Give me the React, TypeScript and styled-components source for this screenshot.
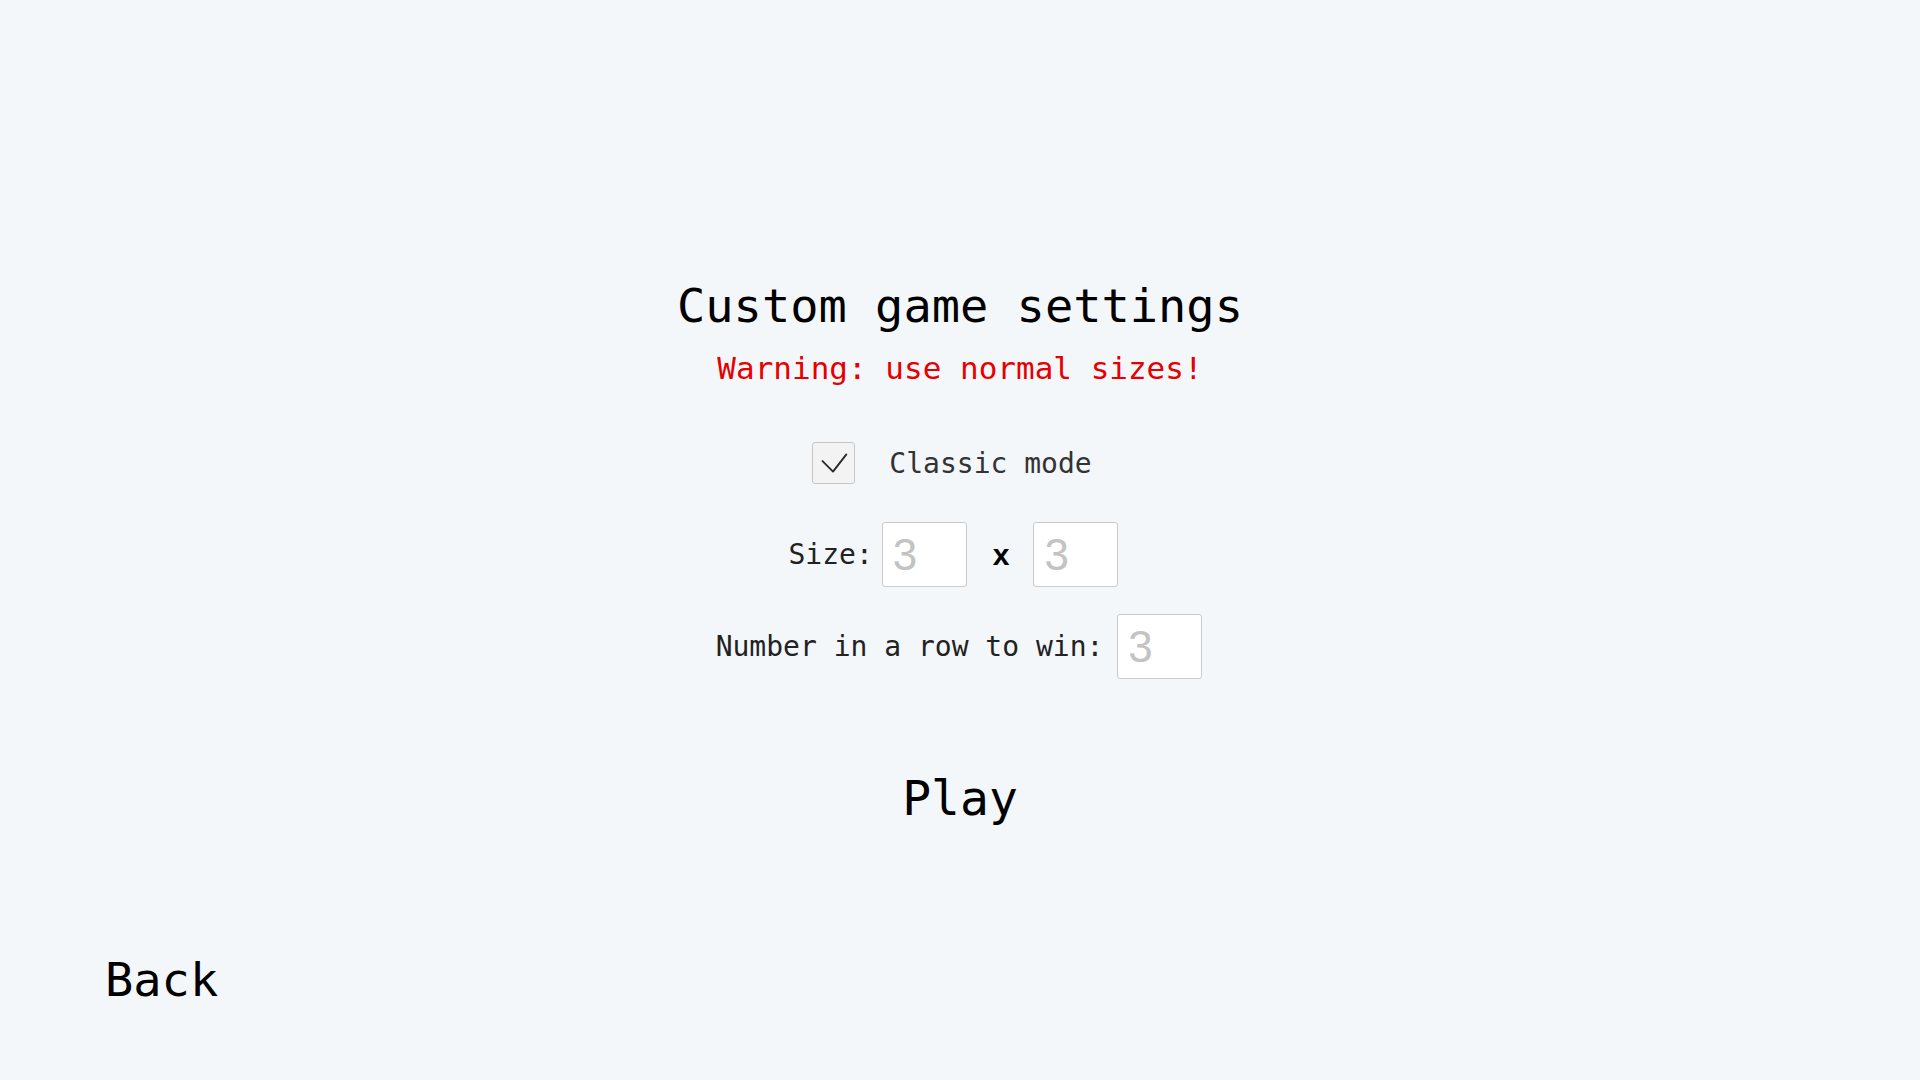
import React from "react";
import styled, { createGlobalStyle } from "styled-components";

const GlobalStyle = createGlobalStyle`
    html, body {
        margin: 0;
        padding: 0;
        background: #f4f7fa;
    }

    body {
        font-family: "DejaVu Sans Mono", "Liberation Mono", monospace;
    }
`;

const App = () => {

    return (
        <Page>
            <GlobalStyle />

            <Settings>
                <Title>Custom game settings</Title>
                <Warning>Warning: use normal sizes!</Warning>

                <CheckRow>
                    <CheckBox type="button" aria-checked="true" role="checkbox">
                        <svg width="43" height="42" viewBox="0 0 43 42">
                            <polyline
                                points="10,19 21,30 35,12"
                                fill="none"
                                stroke="#2b2b2b"
                                strokeWidth="2"
                                strokeLinecap="round"
                                strokeLinejoin="round"
                            />
                        </svg>
                    </CheckBox>
                    <CheckLabel>Classic mode</CheckLabel>
                </CheckRow>

                <FieldRow $shift={13} $gap={9}>
                    <FieldLabel>Size:</FieldLabel>
                    <NumberInput placeholder="3" />
                    <Times>x</Times>
                    <NumberInput placeholder="3" />
                </FieldRow>

                <FieldRow $shift={2} $gap={14} $top={27}>
                    <FieldLabel>Number in a row to win:</FieldLabel>
                    <NumberInput placeholder="3" />
                </FieldRow>

                <PlayButton>Play</PlayButton>
            </Settings>

            <Footer>
                <BackButton>Back</BackButton>
            </Footer>
        </Page>
    )
};

const Page = styled.div`
    min-height: 100vh;
    display: flex;
    flex-direction: column;
    color: #000;
`;

const Settings = styled.main`
    display: flex;
    flex-direction: column;
    align-items: center;
    padding-top: 278px;
`;

const Title = styled.h1`
    margin: 0;
    font-size: 47px;
    font-weight: 400;
    line-height: 56px;
    color: #000;
`;

const Warning = styled.p`
    margin: 16px 0 0;
    font-size: 31px;
    line-height: 36px;
    color: #e60000;
`;

const CheckRow = styled.div`
    display: flex;
    align-items: center;
    gap: 34px;
    margin-top: 56px;
    padding-right: 16px;
`;

const CheckBox = styled.button`
    width: 43px;
    height: 42px;
    padding: 0;
    display: flex;
    align-items: center;
    justify-content: center;
    background: #f3f3f3;
    border: 1px solid #c6c6c6;
    border-radius: 3px;
    box-sizing: border-box;
    cursor: pointer;

    svg {
        display: block;
    }
`;

const CheckLabel = styled.span`
    font-size: 28px;
    color: #333;
`;

const FieldRow = styled.div<{ $shift: number; $gap: number; $top?: number }>`
    display: flex;
    align-items: center;
    gap: ${(p) => p.$gap}px;
    margin-top: ${(p) => p.$top ?? 38}px;
    padding-right: ${(p) => p.$shift}px;
`;

const FieldLabel = styled.label`
    font-size: 28px;
    color: #222;
`;

const Times = styled.span`
    font-family: "Liberation Sans", Arial, sans-serif;
    font-weight: 700;
    font-size: 30px;
    margin: 0 15px 0 17px;
    color: #000;
`;

const NumberInput = styled.input`
    width: 85px;
    height: 65px;
    box-sizing: border-box;
    padding: 0 0 0 10px;
    background: #fff;
    border: 1px solid #cacaca;
    border-radius: 3px;
    font-family: "Liberation Sans", Arial, sans-serif;
    font-size: 44px;
    color: #333;
    outline: none;

    &::placeholder {
        color: #c3c3c3;
    }
`;

const PlayButton = styled.button`
    margin-top: 91px;
    padding: 0;
    background: none;
    border: none;
    font-family: "DejaVu Sans Mono", "Liberation Mono", monospace;
    font-size: 48px;
    line-height: 56px;
    color: #000;
    cursor: pointer;
`;

const Footer = styled.footer`
    display: flex;
    padding: 126px 0 0 105px;
`;

const BackButton = styled.button`
    padding: 0;
    background: none;
    border: none;
    font-family: "DejaVu Sans Mono", "Liberation Mono", monospace;
    font-size: 47px;
    line-height: 56px;
    color: #000;
    cursor: pointer;
`;

export default App;
